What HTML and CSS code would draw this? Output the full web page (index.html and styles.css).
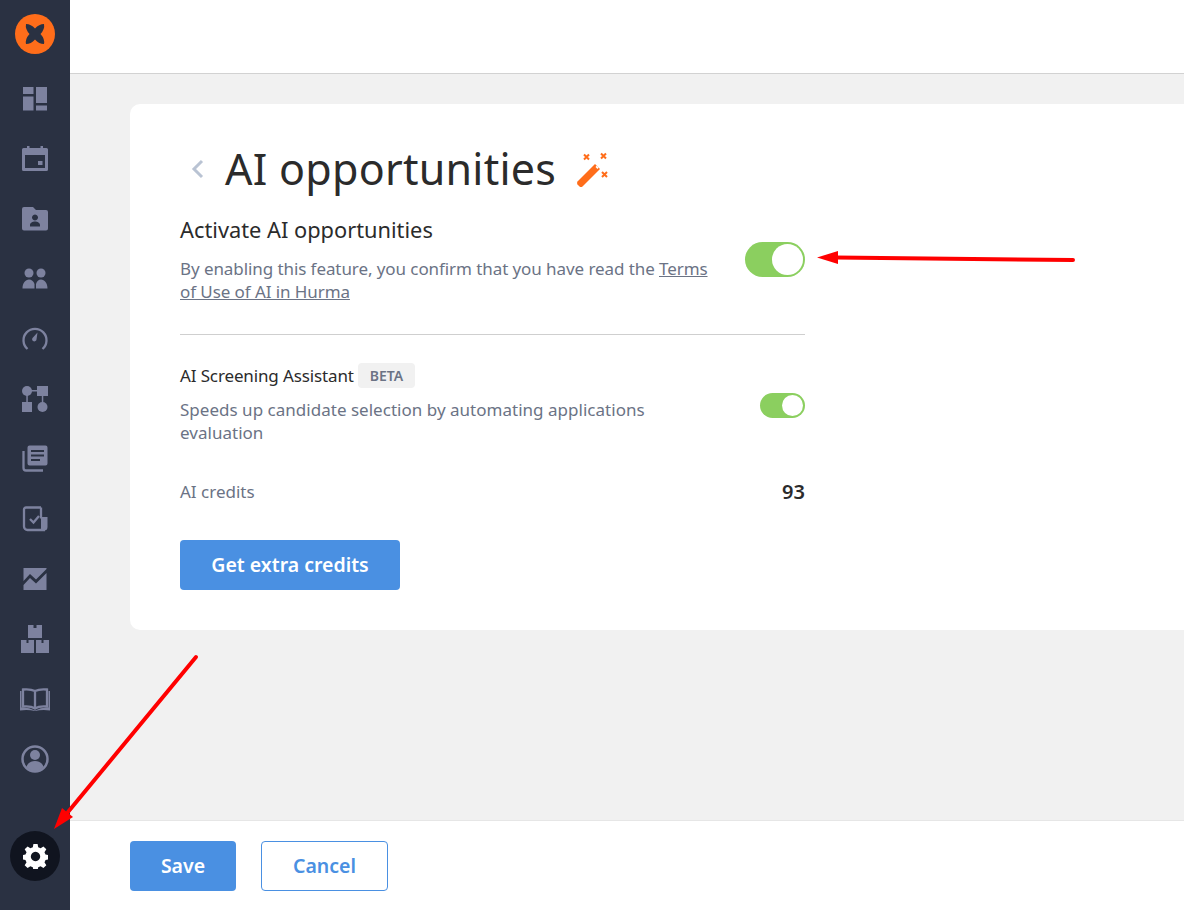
FILE: index.html
```html
<!DOCTYPE html>
<html lang="en">
<head>
<meta charset="utf-8">
<title>AI opportunities</title>
<link rel="stylesheet" href="styles.css">
</head>
<body>
<div class="app">
  <nav class="sidebar">
    <svg class="logo" viewBox="0 0 40 40"><circle cx="20" cy="20" r="20" fill="#ff6d1a"/><path fill="#2a3142" d="M11 10Q16 10 20 14.500Q24 10 29 10Q30 15 25.500 20Q30 25 29 30Q24 30 20 25.500Q16 30 11 30Q10 25 14.500 20Q10 15 11 10z"/></svg>
    <ul class="menu">
      <li><svg class="ico" viewBox="0 0 30 30"><path d="M3 3h10.500v7h-10.500zM3 12.500h10.500v14h-10.500zM16 3h11v16h-11zM16 21.500h11v5h-11z"/></svg></li>
      <li><svg class="ico" viewBox="0 0 30 30"><path fill-rule="evenodd" d="M7 2h2.500v2h11v-2h2.500v2h3.500a1.500 1.500 0 0 1 1.500 1.500v20a1.500 1.500 0 0 1-1.500 1.500h-23a1.500 1.500 0 0 1-1.500-1.500v-20a1.500 1.500 0 0 1 1.500-1.500h3.500zM5 11v13h20v-13zM18 17h4.500v4h-4.500z"/></svg></li>
      <li><svg class="ico" viewBox="0 0 30 30"><path fill-rule="evenodd" d="M4 3h9l3 3h10a2 2 0 0 1 2 2v16.500a2 2 0 0 1-2 2h-22a2 2 0 0 1-2-2v-19.500a2 2 0 0 1 2-2zM15 10.500a3 3 0 1 0 .01 0zM10 22.500h10v-1.500c0-2-2.500-3.500-5-3.500s-5 1.500-5 3.500z"/></svg></li>
      <li><svg class="ico" viewBox="0 0 30 30"><circle cx="9" cy="9" r="4.500"/><circle cx="21" cy="9" r="4.500"/><path d="M2.500 24.500c0-5.500 3-9 6.500-9 2.500 0 4.500 1.500 5.500 4.500v4.500zM16 24.500v-4.500c1-3 2.500-4.500 5-4.500 3.500 0 6.500 3.500 6.500 9z"/></svg></li>
      <li><svg class="ico" viewBox="0 0 30 30"><path class="line" d="M7.500 25a11.500 11.500 0 1 1 15 0"/><path d="M17.500 8.500l-1 7a2.200 2.200 0 1 1-4-1.500z"/></svg></li>
      <li><svg class="ico" viewBox="0 0 30 30"><circle cx="7" cy="7" r="5"/><path d="M17 2h11v10h-11zM2 18h10v10h-10z"/><circle cx="22.500" cy="23" r="5"/><path d="M7 6h11v1.500h-11zM6.300 10h1.500v9h-1.500zM21.800 11h1.500v8h-1.500z"/></svg></li>
      <li><svg class="ico" viewBox="0 0 30 30"><path fill-rule="evenodd" d="M9.500 1.500h16a2 2 0 0 1 2 2v16a2 2 0 0 1-2 2h-16a2 2 0 0 1-2-2v-16a2 2 0 0 1 2-2zM11 6v2h13v-2zM11 10.500v2h13v-2zM11 15v2h9v-2z"/><path class="line" d="M3.500 7v17a2.500 2.500 0 0 0 2.500 2.500h17"/></svg></li>
      <li><svg class="ico" viewBox="0 0 30 30"><path class="line" d="M21 3.500h-15a2 2 0 0 0-2 2v17a3.500 3.500 0 0 0 3.500 3.500h17.500"/><path class="line" d="M21 3.500v11"/><path d="M21 13h6.500v10a3.500 3.500 0 0 1-3.500 3.500h-3z"/><path class="line" d="M10 15l3.500 3.500 5.500-6.500"/></svg></li>
      <li><svg class="ico" viewBox="0 0 30 30"><path d="M3.500 4H26.500V5L16 15.500 10 10 3.500 17zM3.500 21L10 14 16 19.500 26.500 9V26H3.500z"/></svg></li>
      <li><svg class="ico" viewBox="0 0 30 30"><path d="M8 1h5.500v3h3v-3h5.500v13h-14zM1 16h5.500v3h2v-3h5.500v13h-13zM16 16h5.500v3h2v-3h5.500v13h-13z"/></svg></li>
      <li><svg class="ico" viewBox="0 0 30 30"><path class="line" d="M15 7c-3-1.500-7-2-12-1.500v17c5-.5 9 0 12 2 3-2 7-2.500 12-2v-17c-5-.5-9 0-12 1.500zM15 7v18"/><path d="M0 7h1.500v16.500q7-.5 13.500 3 6.500-3.500 13.500-3v-16.500h1.500v19.500q-8-1-15 .5-7-1.500-15-.5z"/></svg></li>
      <li><svg class="ico" viewBox="0 0 30 30"><circle class="line thick" cx="15" cy="15" r="12.500"/><circle cx="15" cy="11" r="5"/><path d="M6.500 23c1-4 4.500-6 8.500-6s7.500 2 8.500 6a11 11 0 0 1-17 0z"/></svg></li>
    </ul>
    <div class="settings">
      <svg class="gear" viewBox="0 0 24 24"><path fill-rule="evenodd" d="M10 0h4l.6 3.100a9 9 0 0 1 2.300 1l2.700-1.800 2.800 2.800-1.800 2.700a9 9 0 0 1 1 2.300l3.100.6v4l-3.100.6a9 9 0 0 1-1 2.300l1.800 2.700-2.800 2.800-2.700-1.800a9 9 0 0 1-2.300 1l-.6 3.100h-4l-.6-3.100a9 9 0 0 1-2.300-1l-2.700 1.800-2.800-2.800 1.800-2.700a9 9 0 0 1-1-2.300l-3.100-.6v-4l3.100-.6a9 9 0 0 1 1-2.300l-1.800-2.700 2.800-2.800 2.700 1.800a9 9 0 0 1 2.300-1zM12 7.500a4.500 4.500 0 1 0 .01 0z"/></svg>
    </div>
  </nav>

  <div class="main">
    <header class="topbar"></header>
    <main class="content">
      <section class="card">
        <div class="title-row">
          <svg class="back" viewBox="0 0 14 20"><path d="M11 2l-8 8 8 8"/></svg>
          <h1 class="title">AI opportunities</h1>
          <svg class="wand" viewBox="0 0 36 36"><path fill="#ff6d1a" d="M21 12l5 5-17.500 17.500q-1.500 1-3 0l-2-2q-1-1.500 0-3z"/><path fill="#fff" d="M21.500 15l1.200-1.200 2 2-1.200 1.200z"/><path stroke="#ff6d1a" stroke-width="2" fill="none" d="M10 2.500l5 5M15 2.500l-5 5M27 1.500l5 5M32 1.500l-5 5M28 20l5 5M33 20l-5 5"/></svg>
        </div>
        <div class="settings-col">
          <div class="row row-main">
            <div class="row-text">
              <h2 class="row-title">Activate AI opportunities</h2>
              <p class="desc">By enabling this feature, you confirm that you have read the <a class="link" href="#">Terms of Use of AI in Hurma</a></p>
            </div>
            <span class="toggle toggle-lg"><span class="knob"></span></span>
          </div>
          <hr class="divider">
          <div class="row row-sub">
            <div class="row-text">
              <div class="label-line"><span class="label">AI Screening Assistant</span><span class="badge">BETA</span></div>
              <p class="desc">Speeds up candidate selection by automating applications evaluation</p>
            </div>
            <span class="toggle toggle-sm"><span class="knob"></span></span>
          </div>
          <div class="credits"><span class="credits-label">AI credits</span><span class="credits-value">93</span></div>
          <button class="btn btn-primary btn-extra">Get extra credits</button>
        </div>
      </section>
    </main>
    <footer class="footer">
      <button class="btn btn-primary btn-save">Save</button>
      <button class="btn btn-outline">Cancel</button>
    </footer>
  </div>
</div>
<svg class="arrows" viewBox="0 0 1184 910">
  <path fill="none" stroke="#f00" stroke-width="4" stroke-linecap="round" d="M836 257.500L1073 260"/>
  <path fill="#f00" d="M817 257.500L838 251V264z"/>
  <path fill="none" stroke="#f00" stroke-width="4" stroke-linecap="round" d="M196 657L68 812"/>
  <path fill="#f00" d="M54 829L62 808 73 817z"/>
</svg>
</body>
</html>
```

FILE: styles.css
```css
* { box-sizing: border-box; }
html, body { margin: 0; height: 100%; overflow: hidden; }
body { font-family: "Noto Sans", "Open Sans", sans-serif; color: #2b2b2b; background: #fff; }

.app { display: flex; height: 100vh; }

.sidebar { width: 70px; flex: none; background: #2a3142; display: flex; flex-direction: column; align-items: center; padding-top: 14px; }
.logo { width: 40px; height: 40px; display: block; }
.menu { list-style: none; margin: 15px 0 0; padding: 0; }
.menu li { width: 70px; height: 60px; display: flex; align-items: center; justify-content: center; }
.ico { width: 30px; height: 30px; fill: #7d829f; display: block; }
.ico .line { fill: none; stroke: #7d829f; stroke-width: 2.300; }
.ico .thick { stroke-width: 2.500; }
.settings { margin-top: 42px; width: 50px; height: 50px; border-radius: 50%; background: #10141f; display: flex; align-items: center; justify-content: center; }
.gear { width: 25px; height: 25px; fill: #fff; }

.main { flex: 1; min-width: 0; display: flex; flex-direction: column; }
.topbar { height: 74px; flex: none; background: #fff; border-bottom: 1px solid #d2d2d2; }
.content { flex: 1; min-height: 0; background: #f1f1f1; padding: 30px 0 0 60px; }
.footer { height: 90px; flex: none; background: #fff; border-top: 1px solid #e6e6e6; padding: 20px 0 0 60px; display: flex; gap: 25px; align-items: flex-start; }

.card { height: 526px; background: #fff; border-radius: 10px 0 0 10px; padding: 40px 50px; }
.title-row { display: flex; align-items: center; height: 50px; }
.back { width: 14px; height: 20px; margin-left: 11px; fill: none; stroke: #b9c3d3; stroke-width: 3; }
.title { margin: 0 0 0 20px; font-size: 43px; line-height: 50px; font-weight: 400; letter-spacing: 0.250px; color: #2b2b2b; }
.wand { width: 36px; height: 36px; margin: 2px 0 0 18px; }

.settings-col { width: 625px; margin-top: 21px; }
.row { display: flex; justify-content: space-between; }
.row-main { height: 107px; align-items: flex-start; }
.row-text { width: 535px; }
.row-title { margin: 0; font-size: 21.800px; line-height: 30px; font-weight: 400; color: #2b2b2b; }
.desc { margin: 12px 0 0; font-size: 17px; line-height: 23px; letter-spacing: -0.080px; color: #6b7385; }
.link { color: #6b7385; text-decoration: underline; }
.toggle { display: block; border-radius: 20px; background: #8bcf5f; position: relative; flex: none; }
.toggle-lg { width: 60px; height: 35px; margin-top: 27px; }
.toggle-sm { width: 45px; height: 25px; margin-top: 30px; }
.knob { position: absolute; top: 2px; right: 2px; border-radius: 50%; background: #fff; }
.toggle-lg .knob { width: 31px; height: 31px; }
.toggle-sm .knob { width: 21px; height: 21px; }
.divider { margin: 12px 0 0; border: 0; border-top: 1px solid #cfcfcf; }
.row-sub { margin-top: 28px; height: 94px; }
.label-line { display: flex; align-items: center; gap: 4px; height: 25px; }
.label { font-size: 17px; letter-spacing: -0.130px; color: #2b2b2b; }
.badge { height: 25px; padding: 0 12px; border-radius: 4px; background: #f1f1f1; color: #6b7385; font-size: 14px; font-weight: 600; line-height: 25px; }
.row-sub .desc { margin-top: 10px; letter-spacing: 0.020px; }
.credits { display: flex; justify-content: space-between; align-items: center; height: 30px; margin-top: 19px; }
.credits-label { font-size: 17px; color: #6b7385; }
.credits-value { font-size: 20px; font-weight: 600; color: #2b2b2b; }

.btn { font-family: inherit; font-size: 19.500px; font-weight: 600; height: 50px; border-radius: 4px; border: 0; padding: 0 0 2px; display: block; }
.btn-primary { background: #4a90e2; color: #fff; }
.btn-extra { width: 220px; margin-top: 34px; }
.btn-save { width: 106px; }
.btn-outline { width: 127px; background: #fff; color: #4a90e2; border: 1px solid #4a90e2; }

.arrows { position: fixed; left: 0; top: 0; width: 1184px; height: 910px; pointer-events: none; }
```
